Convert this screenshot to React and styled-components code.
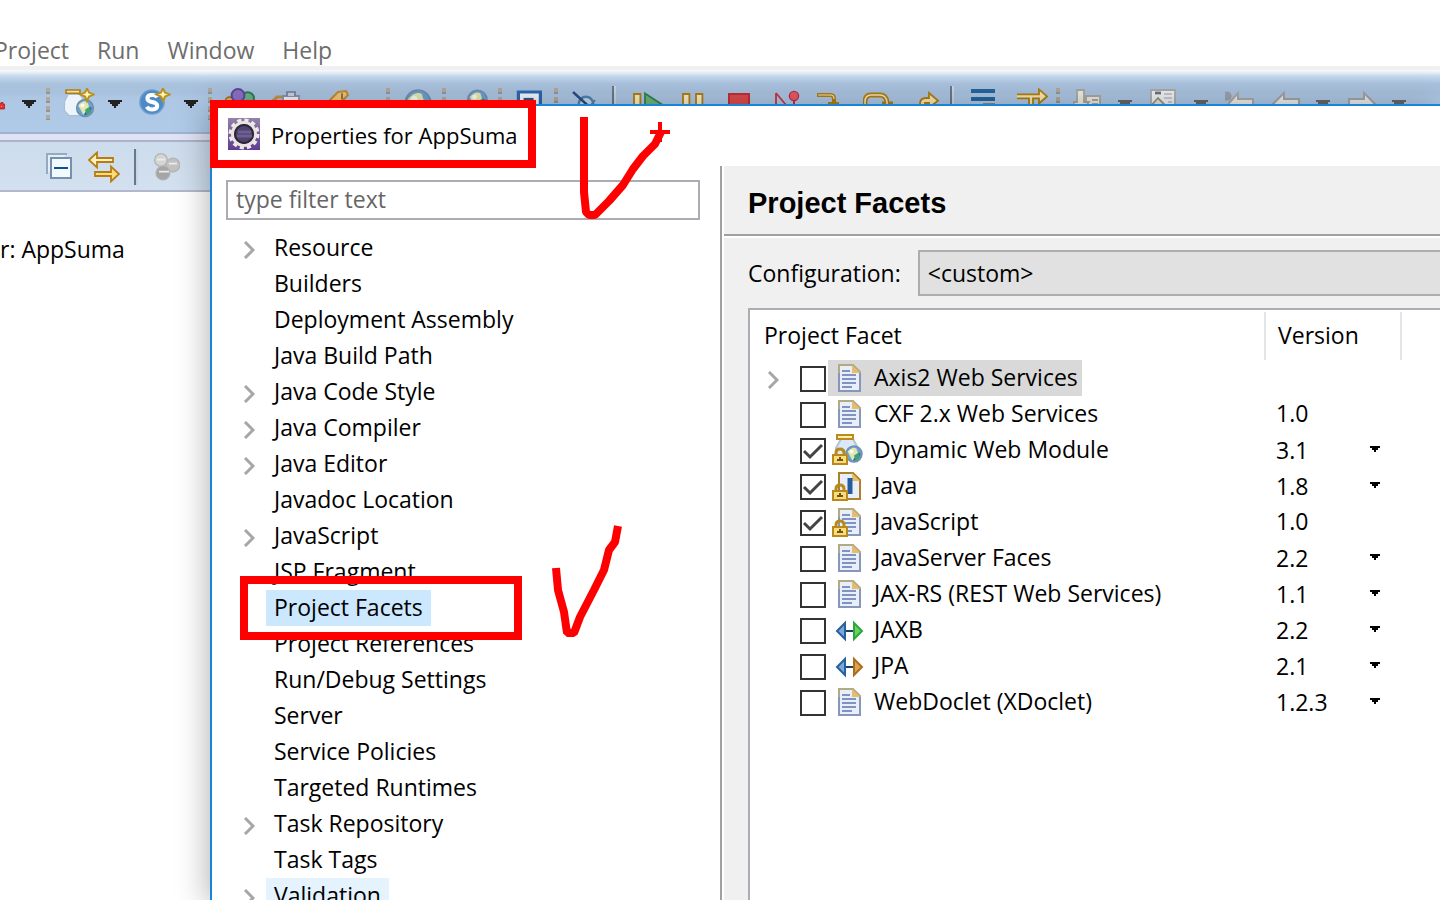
import React from "react";
import styled, { createGlobalStyle } from "styled-components";

const GlobalStyle = createGlobalStyle`
  *, *::before, *::after { box-sizing: border-box; }
  body { margin: 0; background: #fff; }
  button, input, select { font: inherit; color: inherit; margin: 0; }
`;

const Desktop = styled.div`
  position: relative;
  height: 100vh;
  overflow: hidden;
  background: #fff;
  color: #000;
  font: 23px/36px "Open Sans", "Noto Sans", sans-serif;
  white-space: nowrap;
`;

/* ---------- workbench behind the dialog ---------- */

const MenuBar = styled.nav`
  display: flex;
  align-items: flex-end;
  gap: 28px;
  height: 70px;
  margin-left: -6px;
  border-bottom: 4px solid #f0f0f0;
`;
const MenuItem = styled.button`
  height: 32px;
  padding: 0;
  border: 0;
  background: none;
  color: #6d6d6d;
  line-height: 32px;
`;

const ToolBar = styled.div`
  display: flex;
  align-items: center;
  height: 64px;
  padding-top: 6px;
  border-bottom: 2px solid #9fb4d4;
  background: linear-gradient(#f6fafe 0, #e3edf8 3px, #c6d9ec 6px, #a9c2de 14px, #a8c1dd 22px, #adc7e4 28px, #b0cbe8 100%);
`;
const ToolButton = styled.button`
  display: flex;
  flex: none;
  width: ${(p) => (p.$clipped ? 16 : 46)}px;
  padding: 0 ${(p) => (p.$clipped ? 0 : 7)}px;
  border: 0;
  background: none;
`;
const ArrowButton = styled.button`
  display: flex;
  flex: none;
  width: 30px;
  padding: 0 6px;
  border: 0;
  background: none;
  color: ${(p) => (p.$dim ? "#666" : "#222")};
`;
const Grip = styled.span`
  flex: none;
  width: 10px;
  height: 32px;
  background: repeating-linear-gradient(#b1a899 0 4px, #8f959b 4px 6px, transparent 6px 9px) 0 0 / 4px 100% no-repeat;
`;
const ToolRule = styled.span`
  flex: none;
  width: 4px;
  height: 36px;
  margin: 0 ${(p) => (p.$wide ? 14 : 10)}px 0 ${(p) => (p.$wide ? 12 : 2)}px;
  border-left: 2px solid #6b7785;
  border-right: 2px solid #c4d6ea;
`;
const Strip = styled.div`
  height: 8px;
  border-bottom: 2px solid #aeb3cc;
  background: #dfe3f3;
`;
const ViewBar = styled.div`
  display: flex;
  align-items: center;
  height: 50px;
  padding: 2px 0 0 44px;
  border-bottom: 2px solid #b4b8cf;
  background: linear-gradient(#cddcec, #d2e0ef);
`;
const ViewButton = styled.button`
  display: flex;
  width: 32px;
  padding: 0;
  margin-right: ${(p) => (p.$last ? 0 : 12)}px;
  border: 0;
  background: none;
`;
const Editor = styled.p`
  margin: 0;
  padding: 39px 0 0;
`;

/* ---------- properties dialog ---------- */

const Dialog = styled.section`
  position: absolute;
  inset: 104px 0 0 210px;
  display: flex;
  flex-direction: column;
  border: solid #1883d7;
  border-width: 2px 0 0 2px;
  background: #fff;
  box-shadow: 0 5px 32px rgba(0, 0, 0, 0.34);
`;
const TitleBar = styled.header`
  display: flex;
  flex: none;
  gap: 11px;
  height: 60px;
  padding: 12px 16px;
  font-size: 22px;
  line-height: 34px;
`;
const DialogTitle = styled.h1`
  margin: 0;
  font: inherit;
`;
const DialogBody = styled.div`
  display: flex;
  flex: 1;
  min-height: 0;
`;
const Sidebar = styled.aside`
  flex: none;
  width: 512px;
  padding: 14px 22px 0 14px;
  overflow: hidden;
  border-right: 2px solid #fff;
  box-shadow: inset -2px 0 #a0a0a0;
`;
const Filter = styled.input`
  display: block;
  width: 100%;
  height: 40px;
  padding: 0 8px 2px;
  border: 2px solid #acacb2;
  border-radius: 0;
  background: #fff;
  &::placeholder { color: #666; opacity: 1; }
`;
const Tree = styled.ul`
  margin: 10px 0 0;
  padding: 0;
  list-style: none;
`;
const TreeItem = styled.li`
  display: flex;
  align-items: center;
  height: 36px;
`;
const Twisty = styled.span`
  display: flex;
  flex: none;
  justify-content: flex-end;
  width: ${(p) => p.$w}px;
  padding: 4px ${(p) => p.$gap}px 0 0;
`;
const TreeLabel = styled.span`
  padding: 0 8px 2px;
  background: ${(p) => p.$bg || "none"};
  line-height: 34px;
`;

const Content = styled.main`
  display: flex;
  flex: 1;
  flex-direction: column;
  min-width: 0;
  background: #f0f0f0;
`;
const Heading = styled.h2`
  flex: none;
  height: 70px;
  margin: 0 0 12px;
  padding: 18px 24px 0;
  border-bottom: 2px solid #a0a0a0;
  box-shadow: 0 2px #fff;
  font: bold 29px/38px "Liberation Sans", Arial, sans-serif;
`;
const ConfigRow = styled.div`
  display: flex;
  flex: none;
  align-items: center;
  gap: 17px;
  padding: 2px 0 12px 24px;
`;
const ConfigSelect = styled.select`
  flex: 1;
  height: 46px;
  padding: 0 8px;
  appearance: none;
  border: 2px solid #adadad;
  border-right: 0;
  border-radius: 0;
  background: #e1e1e1;
`;
const TableBox = styled.div`
  flex: 1;
  margin-left: 24px;
  padding-top: 2px;
  overflow: hidden;
  border: solid #acacb2;
  border-width: 2px 0 0 2px;
  background: #fff;
`;
const FacetTable = styled.table`
  width: 100%;
  table-layout: fixed;
  border-collapse: collapse;
  th, td { padding: 0; text-align: left; font-weight: 400; }
`;
const Head = styled.th`
  width: ${(p) => (p.$w ? `${p.$w}px` : "auto")};
  height: 48px;
  border-right: ${(p) => (p.$w ? "2px solid #e5e5e5" : "0")};
  span { display: block; padding: 0 0 2px ${(p) => p.$pad}px; }
`;
const FacetLine = styled.div`
  display: flex;
  align-items: center;
  height: 36px;
  padding-left: 10px;
`;
const CheckWrap = styled.span`
  display: grid;
  flex: none;
  width: 26px;
  margin: 2px 2px 0 12px;
  > * { grid-area: 1 / 1; }
`;
const CheckBox = styled.input`
  width: 26px;
  height: 26px;
  margin: 0;
  appearance: none;
  border: 2px solid #333;
  background: #fff;
`;
const FacetLabel = styled.label`
  display: flex;
  align-items: center;
  gap: 10px;
  height: 36px;
  padding: 0 4px;
  background: ${(p) => (p.$selected ? "#d9d9d9" : "none")};
  span { padding-bottom: 2px; line-height: 34px; }
`;
const VersionCell = styled.div`
  display: flex;
  align-items: center;
  height: 36px;
  padding: 0 0 2px 11px;
  svg { margin-left: -16px; pointer-events: none; }
`;
const VersionSelect = styled.select`
  width: 110px;
  height: 34px;
  padding: 0;
  appearance: none;
  border: 0;
  background: none;
`;

/* ---------- hand-drawn marks ---------- */

const RedBox = styled.div`
  position: absolute;
  left: ${(p) => p.$x}px;
  top: ${(p) => p.$y}px;
  width: ${(p) => p.$w}px;
  height: ${(p) => p.$h}px;
  border: 8px solid #f00;
  pointer-events: none;
`;
const RedTick = styled.svg`
  position: absolute;
  left: ${(p) => p.$x}px;
  top: ${(p) => p.$y}px;
  fill: none;
  stroke: #f00;
  stroke-width: 8;
  stroke-linejoin: bevel;
  pointer-events: none;
`;

/* ---------- icons, drawn on a 16-unit grid ---------- */

const Icon = ({ children, size = 32 }) => (
  <svg width={size} height={size} viewBox="0 0 16 16" aria-hidden="true">{children}</svg>
);

const gold = "#b07d12";
const Sparkle = <path d="M12 .2 13 2.300l2.300 1-2.300 1-1 2.300-1-2.300-2.300-1 2.300-1z" fill="#fff3b8" stroke="#b8921e" strokeWidth="1" />;
const Globe = ({ x, y, r = 3.6 }) => (
  <g>
    <circle cx={x} cy={y} r={r} fill="#6aa2d0" stroke="#6f8fae" strokeWidth={r * 0.18} />
    <path d={`M${x - r * 0.1} ${y + r * 0.85}a${r} ${r} 0 0 0 ${r * 0.9}-${r * 0.9}l-${r * 0.5}-${r * 0.1}z`} fill="#4150a4" />
    <path d={`M${x - r * 0.8} ${y - r * 0.3}q${r * 0.6}-${r * 0.7} ${r * 1.1}-${r * 0.4}l${r * 0.2} ${r * 0.6}l-${r * 0.7} ${r * 0.9}z`} fill="#e2e6b0" />
    <path d={`M${x} ${y + r * 0.2}l${r * 0.6}-${r * 0.4} ${r * 0.1} ${r * 0.7}-${r * 0.5} ${r * 0.4}z`} fill="#3fa372" />
    <circle cx={x - r * 0.3} cy={y - r * 0.3} r={r * 0.25} fill="#fff" opacity=".8" />
  </g>
);
const Jar = (
  <g>
    <path d="M2.5 3.2h6l2.4 3.6v4.5l-2 2.5H3l-2.3-2.5V6.8z" fill="#eef4fb" stroke="#a9bfd8" strokeWidth=".7" />
    <path d="M1.5 1h7v1.6h-7z" fill="#f4e3a0" stroke={gold} strokeWidth=".8" />
  </g>
);

const toolIcons = {
  red: <g><path d="M-2 7.500h3V6.500h2v1.500h1.500v5H-2z" fill="#e53131" stroke="#b21010" strokeWidth=".7" /><path d="M1 10h1v1H1z" fill="#ff9a9a" /></g>,
  jar: <g>{Jar}<Globe x={11} y={10} r={4.2} />{Sparkle}</g>,
  service: <g><circle cx="6.500" cy="7" r="6" fill="#4c8bc8" stroke="#6b9bce" strokeWidth=".8" /><path d="M9.100 4.700Q8.500 3.500 6.600 3.500 4.200 3.500 4.200 5.200q0 1.300 2.400 1.800 2.500.5 2.500 2Q9.100 10.700 6.600 10.700 4.600 10.700 3.900 9.400" fill="none" stroke="#fff" strokeWidth="2" />{Sparkle}</g>,
  balls: <g><circle cx="2.500" cy="7" r="2.500" fill="#e2b368" stroke="#a6752a" /><circle cx="11.300" cy="5.300" r="3.200" fill="#6db28b" stroke="#2f7e53" /><circle cx="6.500" cy="3.700" r="3.200" fill="#8a72c4" stroke="#5f469c" /></g>,
  clip: <g><path d="M.5 7 3 4.500h3" fill="none" stroke="#c29144" strokeWidth="1.600" /><path d="M6 4h8v8H6z" fill="#eef0f6" stroke="#8b93a8" strokeWidth=".9" /><path d="M8 4V2h4v2" fill="#c7d0de" stroke="#727d93" strokeWidth=".8" /></g>,
  pen: <g><path d="M4.500 8 10.500 2l4-.5 1 2L11 8z" fill="#f2c573" stroke="#c08b34" /><path d="M12.500 2.600v3" stroke="#71604a" strokeWidth=".8" /></g>,
  globe: <g><Globe x={7.500} y={7.400} r={6.200} /></g>,
  world: <g><Globe x={9.200} y={6} r={4.800} /><path d="M1 6.500h6v3H1z" fill="#4771b0" /></g>,
  window: <g><path d="M1.700 2h11v11h-11z" fill="#f1f4fa" stroke="#2c67b0" strokeWidth="1.600" /><path d="M4.300 5.500h5" stroke="#33528c" strokeWidth="1.100" /></g>,
  skip: <g><circle cx="7.500" cy="8" r="3.600" fill="#c5d8eb" stroke="#4b84b1" strokeWidth="1.200" /><path d="M1 2 12 12" stroke="#2b4b86" strokeWidth="1.200" /><path d="m8 11 4-5" stroke="#577da5" strokeWidth=".9" /></g>,
  resume: <g><path d="M.5 3h3.200v10H.5z" fill="#f7ecbc" stroke={gold} strokeWidth=".9" /><path d="M6 2.700v11l8.500-5.400z" fill="#6fb37d" stroke="#2f8550" strokeWidth=".9" /></g>,
  pause: <path d="M2 3h3.200v10H2zM8.500 3h3.200v10H8.500z" fill="#f7ecc4" stroke={gold} strokeWidth=".9" />,
  stop: <path d="M2 3h10v10H2z" fill="#dc4b4b" stroke="#c22e38" />,
  disconnect: <g><path d="M2.500 2.500v10M2.500 2.500l5 6" stroke="#cb3344" strokeWidth=".9" /><circle cx="11.500" cy="4" r="2.300" fill="#e45a69" stroke="#c22e43" strokeWidth=".7" /><path d="M11.500 6.500v6" stroke="#c22e43" /></g>,
  into: <g fill="none"><path d="M0 3.500h6.800q1.700 0 1.700 2v2.500H11M5.500 8H8" stroke={gold} strokeWidth="2" /><path d="M.6 3.500h6.200q1.700 0 1.700 2" stroke="#f5e5b4" strokeWidth=".6" /></g>,
  over: <g fill="none"><path d="M1 10V7q0-3.500 3-3.500h4.500q3 0 3.500 3.500v2M9.500 8h5.500" stroke={gold} strokeWidth="2.400" /><path d="M1 10V7q0-3.500 3-3.500h4.500q3 0 3.500 3.500v2" stroke="#f5e5b4" strokeWidth=".8" /></g>,
  ret: <path d="M5.500 12V8Q5.500 5 8.500 5h1.500V2.500l4.500 3.800L10 9.800V7.500H8v4.500z" fill="#f7e7b0" stroke={gold} strokeWidth=".9" />,
  lines: <g stroke="#24659f" strokeWidth="1.900"><path d="M0 1.500h12M0 5.500h12" /><path d="M6 8.500h6" stroke="#90815a" /></g>,
  filter: <path d="M-.5 3.200h11.500V.7l4 3.500-4 3.500V5.200H8V13H6V5.200H-.5z" fill="#f7e7b0" stroke={gold} strokeWidth=".9" />,
  next: <g fill="#eceae3" stroke="#a9a69f" strokeWidth=".9"><path d="M6.500 4h7v9h-7z" /><path d="M2 1h3.500v6H8l-4 5-4.500-5H2z" /><path d="M9.500 6h3m-3 2h3" /></g>,
  prev: <g fill="#eef0f2" stroke="#a9a9a9" strokeWidth=".9"><path d="M1 1h12v12H1z" /><path d="M3 2.500h3" stroke="#6b7280" strokeWidth="1.400" /><path d="M7.500 3h4m-4 2h4m-2 2h2" stroke="#c4c7cc" /><path d="m0 10 4.500-5 5 5z" fill="#e4e2da" stroke="#98927c" /></g>,
  lastEdit: <g><path d="M2 7.500 6.500 2.500v3H14v5H2.500z" fill="#ecebe7" stroke="#a8a8a8" /><circle cx="1" cy="4" r="1.800" fill="#9ca2ab" stroke="#9aa0a8" /></g>,
  back: <path d="M1 8 6.500 2.500v3H14v5H6.500V14z" fill="#e9eaec" stroke="#a3a3a3" />,
  forward: <path d="M14 8 8.500 2.500v3H1v5h7.500V14z" fill="#e9eaec" stroke="#a3a3a3" />,
};

const Triangle = ({ small }) =>
  small ? (
    <svg width="10" height="6" viewBox="0 0 10 6" aria-hidden="true"><path d="M0 0h10v2H8v2H6v2H4V4H2V2H0z" /></svg>
  ) : (
    <svg width="14" height="8" viewBox="0 0 14 8" aria-hidden="true"><path d="M0 0h14v2h-2v2h-2v2H8v2H6V6H4V4H2V2H0z" fill="currentColor" /></svg>
  );

const Chevron = () => (
  <svg width="12" height="18" viewBox="0 0 12 18" fill="none" stroke="#a6a6a6" strokeWidth="3" aria-hidden="true"><path d="m2 1 8 8-8 8" /></svg>
);

const EclipseIcon = () => (
  <svg width="32" height="32" viewBox="0 0 32 32" aria-hidden="true">
    <defs><linearGradient id="ecl" x2="0" y2="1"><stop stopColor="#9382aa" /><stop offset="1" stopColor="#5d3d91" /></linearGradient></defs>
    <path d="M0 0h32v32H0z" fill="url(#ecl)" />
    <circle cx="16" cy="16" r="13.500" fill="none" stroke="#eeeae8" strokeWidth="4" strokeDasharray="4 3.070" />
    <circle cx="16" cy="16" r="11.500" fill="#40375b" stroke="#e9e4e2" strokeWidth="3" />
    <circle cx="16" cy="16" r="9" fill="#51436f" stroke="#2b2638" strokeWidth="2" />
    <path d="M10 14h13M9 18h15" stroke="#6d5f8e" strokeWidth="3" />
  </svg>
);

const Lock = () => (
  <g>
    <path d="M4 20v-3q0-4 4-4t4 4v3" fill="none" stroke="#b8891b" strokeWidth="3" />
    <path d="M1 19h14v9H1z" fill="#f8dc82" stroke="#b8891b" strokeWidth="2" />
    <path d="M7 21h2v2h2v2H5v-2h2z" fill="#765310" />
  </g>
);
const Page = ({ java }) => (
  <g>
    <path d="M7 1h14l7 7v19H7z" fill="#e8effa" stroke={java ? "#ad8128" : "#b2aa80"} strokeWidth="2" />
    {!java && <path d="M7 9v18h21V9" fill="none" stroke="#8797bb" strokeWidth="2" />}
    <path d="M20 1v8h8z" fill="#e5bd6b" />
    {java ? (
      <path d="M18 6v16" stroke="#245c9d" strokeWidth="5" />
    ) : (
      <path d="M10 7h8m-8 4h14m-14 4h14m-14 4h14m-14 4h10" stroke="#8093c1" strokeWidth="2" />
    )}
  </g>
);
const Arrows = ({ fill, edge }) => (
  <g>
    <path d="M13 7v16L5 15z" fill="#7da6dd" stroke="#27619a" strokeWidth="2" />
    <path d="M22 7v16l8-8z" fill={fill} stroke={edge} strokeWidth="2" />
    <path d="M14 15h7" stroke="#17406e" strokeWidth="2" />
  </g>
);
const WebModule = () => (
  <g>
    <path d="M9 3h12l5 9v9H4v-9z" fill="#dce8f7" stroke="#b4c3d8" strokeWidth="2" />
    <path d="M5-1h16v4H5z" fill="#fbeeb4" stroke="#bd8b1b" strokeWidth="2" />
    <Globe x={22} y={18} r={8} />
    <Lock />
  </g>
);

const facetGlyphs = {
  page: <Page />,
  lockedPage: <g><Page /><Lock /></g>,
  java: <g><Page java /><Lock /></g>,
  web: <WebModule />,
  jaxb: <Arrows fill="#66d35f" edge="#2fa63b" />,
  jpa: <Arrows fill="#e0a24b" edge="#a86f1d" />,
};
const FacetIcon = ({ kind }) => (
  <svg width="32" height="32" viewBox="0 -2 32 32" aria-hidden="true">{facetGlyphs[kind]}</svg>
);

/* ---------- data ---------- */

const tools = [
  "red:clipped", ">", "|", "jar", ">", "service", ">", "|", "balls", "clip", "pen", ">", "|", "globe", "|", "world", "|",
  "window", "|", "skip", "/", "resume", "pause", "stop", "disconnect", "into", "over", "ret", "/", "lines", "filter", "|",
  "next", "~", "prev", "~", "lastEdit", "back", "~", "forward", "~",
];

const treeItems = [
  ["Resource", true], ["Builders"], ["Deployment Assembly"], ["Java Build Path"], ["Java Code Style", true],
  ["Java Compiler", true], ["Java Editor", true], ["Javadoc Location"], ["JavaScript", true], ["JSP Fragment"],
  ["Project Facets", false, "#cce8ff"], ["Project References"], ["Run/Debug Settings"], ["Server"], ["Service Policies"],
  ["Targeted Runtimes"], ["Task Repository", true], ["Task Tags"], ["Validation", true, "#e5f3ff"],
];

const facets = [
  { name: "Axis2 Web Services", icon: "page", expandable: true, selected: true },
  { name: "CXF 2.x Web Services", icon: "page", version: "1.0" },
  { name: "Dynamic Web Module", icon: "web", version: "3.1", menu: true, checked: true },
  { name: "Java", icon: "java", version: "1.8", menu: true, checked: true },
  { name: "JavaScript", icon: "lockedPage", version: "1.0", checked: true },
  { name: "JavaServer Faces", icon: "page", version: "2.2", menu: true },
  { name: "JAX-RS (REST Web Services)", icon: "page", version: "1.1", menu: true },
  { name: "JAXB", icon: "jaxb", version: "2.2", menu: true },
  { name: "JPA", icon: "jpa", version: "2.1", menu: true },
  { name: "WebDoclet (XDoclet)", icon: "page", version: "1.2.3", menu: true },
];

const Tool = ({ id }) => {
  if (id === "|") return <Grip />;
  if (id === "/") return <ToolRule />;
  if (id === ">" || id === "~") return <ArrowButton $dim={id === "~"} aria-label="More"><Triangle /></ArrowButton>;
  const [name, clipped] = id.split(":");
  return <ToolButton $clipped={!!clipped} aria-label={name}><Icon>{toolIcons[name]}</Icon></ToolButton>;
};

const FacetRow = ({ facet, index }) => (
  <tr>
    <td>
      <FacetLine>
        <Twisty $w={28} $gap={9}>{facet.expandable && <Chevron />}</Twisty>
        <CheckWrap>
          <CheckBox type="checkbox" id={`facet-${index}`} defaultChecked={facet.checked} />
          {facet.checked && (
            <svg width="26" height="26" viewBox="0 0 26 26" fill="none" stroke="#444" strokeWidth="3" pointerEvents="none" aria-hidden="true">
              <path d="m4 13 6 6L22 7" />
            </svg>
          )}
        </CheckWrap>
        <FacetLabel htmlFor={`facet-${index}`} $selected={facet.selected}>
          <FacetIcon kind={facet.icon} />
          <span>{facet.name}</span>
        </FacetLabel>
      </FacetLine>
    </td>
    <td>
      <VersionCell>
        {facet.menu ? (
          <>
            <VersionSelect aria-label={`${facet.name} version`} defaultValue={facet.version}>
              <option>{facet.version}</option>
            </VersionSelect>
            <Triangle small />
          </>
        ) : (
          facet.version
        )}
      </VersionCell>
    </td>
    <td />
  </tr>
);

export default function App() {
  return (
    <Desktop>
      <GlobalStyle />
      <MenuBar>
        {["Project", "Run", "Window", "Help"].map((m) => <MenuItem key={m}>{m}</MenuItem>)}
      </MenuBar>
      <ToolBar>{tools.map((id, i) => <Tool key={i} id={id} />)}</ToolBar>
      <Strip />
      <ViewBar>
        <ViewButton aria-label="Collapse all">
          <Icon>
            <path d="M1.500 11.500V1.500h10" fill="#e3eff7" stroke="#95a9c0" />
            <path d="M3.500 3.500h10v10h-10z" fill="#f0faff" stroke="#7790ad" />
            <path d="M5 8.500h7" stroke="#124f8d" />
          </Icon>
        </ViewButton>
        <ViewButton aria-label="Link with editor">
          <Icon>
            <path d="M.5 4.500 4.500.8v2.700h8v2h-8v2.700z" fill="#fff2c0" stroke="#b87d12" strokeWidth=".9" />
            <path d="M15.500 11.500 11.500 7.800v2.700h-8v2h8v2.700z" fill="#fbdc7d" stroke="#b87d12" strokeWidth=".9" />
          </Icon>
        </ViewButton>
        <ToolRule />
        <ViewButton $last aria-label="Focus">
          <Icon>
            <g stroke="#b3b3b3" strokeWidth=".6">
              <circle cx="6.500" cy="4.500" r="3.200" fill="#d5d5d5" /><circle cx="12.500" cy="7" r="3.400" fill="#c2c2c2" /><circle cx="7.500" cy="11" r="3.500" fill="#a5a5a5" />
            </g>
            <path d="M4.500 4.300h4m2 2h4m-9 4h5" stroke="#ececec" strokeWidth=".9" />
          </Icon>
        </ViewButton>
      </ViewBar>
      <Editor>r: AppSuma</Editor>

      <Dialog aria-label="Properties for AppSuma">
        <TitleBar>
          <EclipseIcon />
          <DialogTitle>Properties for AppSuma</DialogTitle>
        </TitleBar>
        <DialogBody>
          <Sidebar>
            <Filter type="text" placeholder="type filter text" aria-label="Filter" />
            <Tree>
              {treeItems.map(([name, expandable, bg]) => (
                <TreeItem key={name}>
                  <Twisty $w={40} $gap={11}>{expandable && <Chevron />}</Twisty>
                  <TreeLabel $bg={bg}>{name}</TreeLabel>
                </TreeItem>
              ))}
            </Tree>
          </Sidebar>
          <Content>
            <Heading>Project Facets</Heading>
            <ConfigRow>
              <label htmlFor="config">Configuration:</label>
              <ConfigSelect id="config"><option>&lt;custom&gt;</option></ConfigSelect>
            </ConfigRow>
            <TableBox>
              <FacetTable>
                <thead>
                  <tr>
                    <Head $w={515} $pad={14}><span>Project Facet</span></Head>
                    <Head $w={136} $pad={12}><span>Version</span></Head>
                    <Head />
                  </tr>
                </thead>
                <tbody>
                  {facets.map((f, i) => <FacetRow key={f.name} facet={f} index={i} />)}
                </tbody>
              </FacetTable>
            </TableBox>
          </Content>
        </DialogBody>
      </Dialog>

      <RedBox $x={210} $y={100} $w={326} $h={68} />
      <RedBox $x={240} $y={576} $w={282} $h={64} />
      <RedTick $x={576} $y={112} width="100" height="112" viewBox="0 0 100 112" aria-hidden="true">
        <path d="M8 5v75l2 20 3 3h6l14-14 14-16 10-16 10-13 12-12 6-12" />
        <path d="M84 10v20" strokeWidth="4" /><path d="M74 20h20" strokeWidth="4" />
      </RedTick>
      <RedTick $x={546} $y={520} width="80" height="120" viewBox="0 0 80 120" aria-hidden="true">
        <path d="M10 48l2 22 6 22 3 21h7l6-16 14-27 10-20 5-20 6-8 3-16" />
      </RedTick>
    </Desktop>
  );
}
